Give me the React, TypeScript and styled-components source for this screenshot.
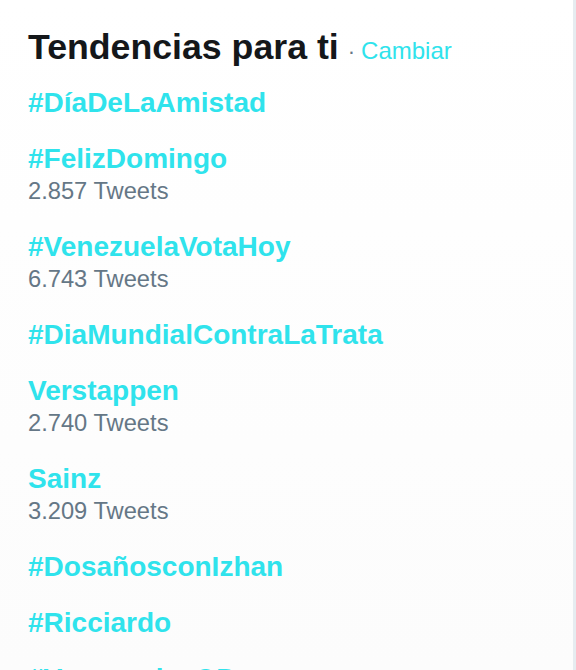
import React from "react";
import styled, { createGlobalStyle } from "styled-components";

const GlobalStyle = createGlobalStyle`
  html, body { margin: 0; padding: 0; background: #e6ecf0; }
  body { font-family: "Liberation Sans", Arial, Helvetica, sans-serif; }
`;

const Page = styled.div`
  display: flex;
  width: 576px;
  height: 670px;
  overflow: hidden;
  background: #e6ecf0;
`;

const Panel = styled.section`
  width: 573px;
  height: 670px;
  background: linear-gradient(#ffffff, #fcfcfc);
  padding: 27px 0 0 28px;
  box-sizing: border-box;
  overflow: hidden;
`;

const Header = styled.h2`
  margin: 0 0 14px;
  display: flex;
  align-items: baseline;
  line-height: 40px;
  white-space: nowrap;
`;

const Title = styled.span`
  font-size: 35.7px;
  font-weight: 700;
  color: #14171a;
`;

const Dot = styled.span`
  font-size: 22px;
  font-weight: 400;
  color: #657786;
  margin: 0 6px 0 9px;
`;

const Change = styled.a`
  font-size: 24px;
  font-weight: 400;
  color: #2fe3ec;
  text-decoration: none;
`;

const List = styled.ul`
  list-style: none;
  margin: 0;
  padding: 0;
  display: flex;
  flex-direction: column;
  gap: 23px;
`;

const Item = styled.li`
  display: flex;
  flex-direction: column;
`;

const Name = styled.a`
  font-size: 28px;
  font-weight: 700;
  line-height: 33px;
  color: #2fe3ec;
  text-decoration: none;
  white-space: nowrap;
`;

const Count = styled.span`
  font-size: 23.7px;
  line-height: 32px;
  color: #657786;
  white-space: nowrap;
`;

const trends: { name: string; count?: string }[] = [
  { name: "#DíaDeLaAmistad" },
  { name: "#FelizDomingo", count: "2.857 Tweets" },
  { name: "#VenezuelaVotaHoy", count: "6.743 Tweets" },
  { name: "#DiaMundialContraLaTrata" },
  { name: "Verstappen", count: "2.740 Tweets" },
  { name: "Sainz", count: "3.209 Tweets" },
  { name: "#DosañosconIzhan" },
  { name: "#Ricciardo" },
  { name: "#VenezuelaxOD" },
];

export default function App() {
  return (
    <>
      <GlobalStyle />
      <Page>
        <Panel>
          <Header>
            <Title>Tendencias para ti</Title>
            <Dot>·</Dot>
            <Change href="#">Cambiar</Change>
          </Header>
          <List>
            {trends.map((t) => (
              <Item key={t.name}>
                <Name href="#">{t.name}</Name>
                {t.count && <Count>{t.count}</Count>}
              </Item>
            ))}
          </List>
        </Panel>
      </Page>
    </>
  );
}
